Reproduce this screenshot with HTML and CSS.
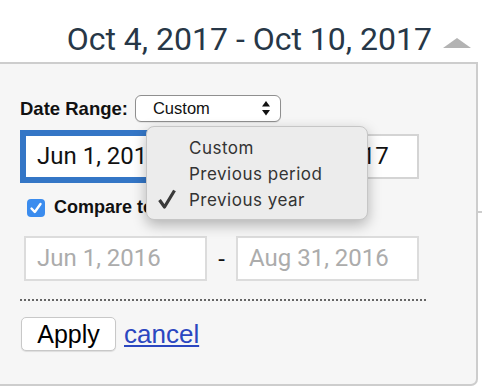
FILE: index.html
```html
<!DOCTYPE html>
<html lang="en">
  <head>
    <meta charset="UTF-8" />
    <title>Date range picker</title>
    <link rel="stylesheet" href="styles.css">
  </head>
  <body>
    <header class="range-head">
      <span class="range-title">Oct 4, 2017 - Oct 10, 2017</span>
      <svg class="caret" width="28" height="10" viewBox="0 0 28 10">
        <polygon points="14,0 28,10 0,10" fill="#b3b3b3" />
      </svg>
    </header>
    <section class="panel">
      <div class="range-row">
        <span class="label">Date Range:</span>
        <div class="select">
          <span>Custom</span>
          <svg class="arrows" width="8" height="15" viewBox="0 0 8 15">
            <polygon points="4,0 8,5.5 0,5.5" fill="#111" />
            <polygon points="0,9 8,9 4,14.5" fill="#111" />
          </svg>
        </div>
      </div>
      <div class="dates">
        <div class="field field-focus">Jun 1, 2017</div>
        <span class="dash">-</span>
        <div class="field">Aug 31, 2017</div>
      </div>
      <div class="compare">
        <span class="check">
          <svg width="18" height="18" viewBox="0 0 18 18">
            <path d="M4.5 9.5 L7.8 13 L13.5 5" fill="none" stroke="#fff" stroke-width="2.4" stroke-linecap="round" stroke-linejoin="round" />
          </svg>
        </span>
        <span class="compare-text">Compare to</span>
      </div>
      <div class="dates dates-off">
        <div class="field">Jun 1, 2016</div>
        <span class="dash">-</span>
        <div class="field">Aug 31, 2016</div>
      </div>
      <div class="divider"></div>
      <div class="actions">
        <button class="apply" type="button">Apply</button>
        <a class="cancel" href="#">cancel</a>
      </div>

      <ul class="menu">
        <li>Custom</li>
        <li>Previous period</li>
        <li class="picked">
          <svg class="tick" width="18" height="20" viewBox="0 0 18 20">
            <path d="M1.5 11 L6.5 18 L16.5 1.5" fill="none" stroke="#3a3a3a" stroke-width="3.2" stroke-linejoin="round" />
          </svg>
          Previous year
        </li>
      </ul>
    </section>
    <div class="edge"></div>
  </body>
</html>
```

FILE: styles.css
```css
body {
  margin: 0;
  background: #fff;
  font-family: "Liberation Sans", Arial, sans-serif;
  color: #111;
}

.range-head {
  height: 62px;
  box-sizing: border-box;
  padding: 21px 11px 0 0;
  display: flex;
  justify-content: flex-end;
  align-items: flex-start;
  gap: 11px;
}

.range-title {
  font-family: Roboto, sans-serif;
  font-size: 32px;
  line-height: 37px;
  color: #273747;
}

.caret {
  margin-top: 17px;
}

.panel {
  position: relative;
  width: 478px;
  height: 324px;
  box-sizing: border-box;
  background: #f6f6f6;
  border: 2px solid #cdcdcd;
  border-left: none;
  border-bottom-right-radius: 7px;
  padding: 31px 0 0 20px;
}

.range-row {
  display: flex;
  align-items: center;
  gap: 7px;
  height: 27px;
}

.label {
  font-weight: bold;
  font-size: 18.5px;
}

.select {
  width: 146px;
  height: 27px;
  box-sizing: border-box;
  border: 1px solid #8f8f8f;
  border-radius: 6px;
  background: #fff;
  display: flex;
  align-items: center;
  justify-content: space-between;
  padding: 0 10px 0 17px;
  font-size: 16.5px;
  box-shadow: 0 1px 1px rgba(0, 0, 0, 0.08);
}

.dates {
  display: flex;
  align-items: center;
  margin: 12px 0 0 4px;
}

.field {
  width: 183px;
  height: 45px;
  box-sizing: border-box;
  border: 2px solid #d4d4d4;
  background: #fff;
  padding-left: 11px;
  font-family: Roboto, sans-serif;
  font-size: 24px;
  line-height: 41px;
  color: #111;
}

.field-focus {
  border-color: #3476c6;
  box-shadow: 0 0 0 4px #3476c6;
}

.dash {
  width: 29px;
  text-align: center;
  font-family: Roboto, sans-serif;
  font-size: 24px;
}

.dates-off {
  margin-top: 0;
}

.dates-off .field {
  border-color: #dcdcdc;
  color: #acacac;
}

.compare {
  display: flex;
  align-items: center;
  gap: 9px;
  height: 57px;
  margin-left: 7px;
}

.check {
  width: 18px;
  height: 18px;
  border-radius: 4px;
  background: #3b8cee;
  display: flex;
}

.compare-text {
  font-weight: bold;
  font-size: 18px;
}

.divider {
  width: 406px;
  margin-top: 18px;
  border-top: 2px dotted #666;
}

.actions {
  display: flex;
  align-items: center;
  gap: 8px;
  margin: 16px 0 0 1px;
}

.apply {
  width: 95px;
  height: 34px;
  border: 1px solid #c8c8c8;
  border-radius: 5px;
  background: #fff;
  font-family: "Liberation Sans", Arial, sans-serif;
  font-size: 25px;
  color: #000;
  padding: 0;
  box-shadow: 0 1px 1px rgba(0, 0, 0, 0.1);
}

.cancel {
  font-size: 26px;
  color: #2b47c0;
}

.menu {
  position: absolute;
  top: 62px;
  left: 146px;
  width: 222px;
  height: 94px;
  box-sizing: border-box;
  margin: 0;
  padding: 8px 0 0 42px;
  list-style: none;
  background: #ececec;
  border: 1px solid #c6c6c6;
  border-radius: 8px;
  box-shadow: 0 5px 14px rgba(0, 0, 0, 0.28);
  font-family: Inter, sans-serif;
  font-size: 17px;
  letter-spacing: 0.5px;
  line-height: 26px;
  color: #333;
}

.picked {
  position: relative;
}

.tick {
  position: absolute;
  left: -31px;
  top: 2px;
}

.edge {
  position: absolute;
  top: 211px;
  left: 478px;
  width: 4px;
  height: 2px;
  background: #cdcdcd;
}
```
